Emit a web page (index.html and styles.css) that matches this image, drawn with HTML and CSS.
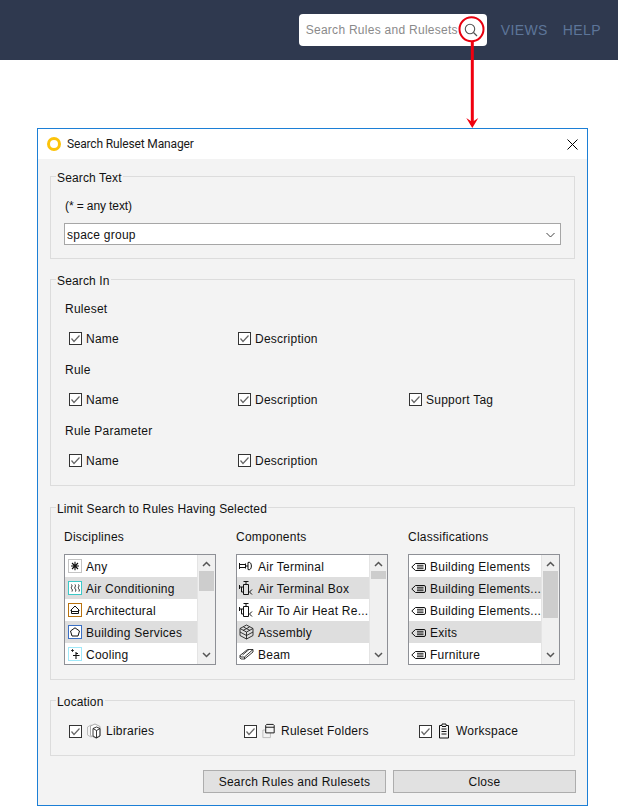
FILE: index.html
```html
<!DOCTYPE html>
<html lang="en">
<head>
<meta charset="utf-8">
<title>Search Ruleset Manager</title>
<link rel="stylesheet" href="styles.css">
</head>
<body>
<svg class="sprite" width="0" height="0" aria-hidden="true">
  <defs>
    <symbol id="chk" viewBox="0 0 13 13"><rect x=".5" y=".5" width="12" height="12" fill="#fff" stroke="#333"/><path d="M2.5 6.5 5 9.5 10.5 3.5" fill="none" stroke="#666" stroke-width="1.2"/></symbol>
    <symbol id="any" viewBox="0 0 14 14"><rect x=".5" y=".5" width="13" height="13" fill="#fff" stroke="#c4c4c4"/><path d="M3 7h8M7 2.800v8.400M4 4l6 6M10 4l-6 6" stroke="#111" fill="none" stroke-width="1.100"/></symbol>
    <symbol id="air" viewBox="0 0 14 14"><rect x=".5" y=".5" width="13" height="13" fill="#fff" stroke="#3cc8c8"/><path d="M3.5 3.5c1.500 1.500-1 3 0 4s1 2 .5 3M7 3.5c1.500 1.500-1 3 0 4s1 2 .5 3M10.500 3.500c1.500 1.500-1 3 0 4s1 2 .5 3" stroke="#222" fill="none"/></symbol>
    <symbol id="arc" viewBox="0 0 14 14"><rect x=".5" y=".5" width="13" height="13" fill="#fff" stroke="#b8720f"/><path d="M2.500 7.500 7 3l4.500 4.500M3.500 7v3.500h7V7M3 8.500h8" stroke="#111" fill="none"/></symbol>
    <symbol id="bld" viewBox="0 0 14 14"><rect x=".5" y=".5" width="13" height="13" fill="#fff" stroke="#3a6fc4"/><path d="M7 2.800 11.500 6 10 11H4L2.500 6Z" stroke="#111" fill="none"/></symbol>
    <symbol id="coo" viewBox="0 0 14 14"><rect x=".5" y=".5" width="13" height="13" fill="#fff" stroke="#a0e8f8"/><path d="M8 5v7M5 8.500h6.500M8 6.500h2" stroke="#111" fill="none" stroke-width="1.100"/><path d="M3 3.500h3M4.500 2v3" stroke="#111" fill="none" stroke-width=".8"/></symbol>
    <symbol id="ter" viewBox="0 0 16 16"><path d="M.5 5v6M.5 6.500h6M.5 9.500h6M6.500 5.500v5M9 4.500c4.500-2 4.500 9 0 7ZM6.500 8h2.500" stroke="#111" fill="none"/></symbol>
    <symbol id="box" viewBox="0 0 16 16"><path d="M4.500 1.500h5M7 1.500V4.500M4.500 4.500h5v10h-5ZM.5 5v4M.5 7h4M2.500 7v5h2M13 9.500 10.500 12l2.500 2.500" stroke="#111" fill="none"/></symbol>
    <symbol id="asm" viewBox="0 0 16 16"><path d="M7.500 1 14 4.500v7L7.500 15 1 11.500v-7ZM1 4.500 7.500 8 14 4.500M7.500 8v7M4.500 3 11 6.500M10.500 3 4 6.500M1 8l6.500 3.500L14 8" stroke="#222" fill="none" stroke-width=".9"/></symbol>
    <symbol id="bea" viewBox="0 0 16 16"><path d="M1 9.500 8.500 3.500h5.500L5.500 11H2ZM1 9.500v2.500l1 1h3.500L14 6V3.500M5.500 11v2M3.500 9 10 3.500" stroke="#222" fill="none" stroke-width=".9"/></symbol>
    <symbol id="tag" viewBox="0 0 16 16"><path d="M.8 9 4.500 5.500h8.500q1.500 0 1.500 1.500v4q0 1.500-1.500 1.500H4.500Z" stroke="#111" fill="none"/><path d="M6 7.300h6.500M6 9h6.500M6 10.700h6.500" stroke="#111" fill="none" stroke-width=".9"/></symbol>
    <symbol id="lib" viewBox="0 0 16 16"><path d="M1.500 4 5 2l3 1.500V12l-3 2-3.500-2Z" stroke="#bbb" fill="none"/><path d="M4.500 3 9 1l5 2.500v9L9.500 15l-5-2.500Z" stroke="#aaa" fill="#fff"/><path d="M7 5.500 10.500 4l3.500 1.500V13l-3.500 2L7 13ZM7 5.500l3.500 2 3.500-2M10.500 7.500V15" stroke="#222" fill="none" stroke-width=".9"/></symbol>
    <symbol id="fol" viewBox="0 0 16 17"><path d="M1.500 7.500h8v8h-8Z" stroke="#bbb" fill="none"/><path d="M4.500 2.500l1-1h7l1 1v8h-9ZM4.500 4.500h9" stroke="#111" fill="#f3f3f3"/></symbol>
    <symbol id="wsp" viewBox="0 0 12 16"><path d="M1.500 2.500h2.500v-1.500h4v1.500h2.500v12.500h-9ZM3.500 6h5M3.500 8.500h5M3.500 11h5M4 3.500h4" stroke="#111" fill="none"/></symbol>
  </defs>
</svg>

<header class="topbar">
  <div class="search">
    <span class="search-text">Search Rules and Rulesets</span>
    <svg class="search-icon" viewBox="0 0 14 14" width="14" height="14"><circle cx="6" cy="6" r="4.700" fill="none" stroke="#555" stroke-width="1.100"/><path d="M9.500 9.500 13 13" stroke="#555" stroke-width="1.200"/></svg>
  </div>
  <nav class="nav"><span>VIEWS</span><span>HELP</span></nav>
</header>

<svg class="callout" width="40" height="120" viewBox="0 0 40 120" aria-hidden="true">
  <circle cx="19.500" cy="17.300" r="12" fill="none" stroke="#e8000f" stroke-width="2"/>
  <path d="M20.300 30v83" stroke="#f0000f" stroke-width="3"/>
  <path d="M20.300 116l-6-10 6 4 6-4Z" fill="#f0000f"/>
</svg>

<main class="dialog">
  <div class="titlebar">
    <span class="ring"></span>
    <span class="title">Search Ruleset Manager</span>
    <svg class="close" width="11" height="11" viewBox="0 0 11 11"><path d="M.5.500l10 10M10.500.500l-10 10" stroke="#000" fill="none"/></svg>
  </div>
  <div class="body">
    <fieldset class="group g-text">
      <legend>Search Text</legend>
      <p class="hint">(* = any text)</p>
      <div class="combo"><span>space group</span><svg width="9" height="6" viewBox="0 0 9 6"><path d="M.5 1 4.500 5 8.500 1" fill="none" stroke="#444"/></svg></div>
    </fieldset>

    <fieldset class="group g-in">
      <legend>Search In</legend>
      <h3 class="sub">Ruleset</h3>
      <div class="checks">
        <label class="check"><svg><use href="#chk"/></svg>Name</label>
        <label class="check"><svg><use href="#chk"/></svg>Description</label>
      </div>
      <h3 class="sub">Rule</h3>
      <div class="checks">
        <label class="check"><svg><use href="#chk"/></svg>Name</label>
        <label class="check"><svg><use href="#chk"/></svg>Description</label>
        <label class="check"><svg><use href="#chk"/></svg>Support Tag</label>
      </div>
      <h3 class="sub">Rule Parameter</h3>
      <div class="checks">
        <label class="check"><svg><use href="#chk"/></svg>Name</label>
        <label class="check"><svg><use href="#chk"/></svg>Description</label>
      </div>
    </fieldset>

    <fieldset class="group g-limit">
      <legend>Limit Search to Rules Having Selected</legend>
      <div class="lists">
        <section>
          <h3 class="col-title">Disciplines</h3>
          <div class="listbox">
            <ul>
              <li><svg class="i14"><use href="#any"/></svg>Any</li>
              <li class="sel"><svg class="i14"><use href="#air"/></svg>Air Conditioning</li>
              <li><svg class="i14"><use href="#arc"/></svg>Architectural</li>
              <li class="sel"><svg class="i14"><use href="#bld"/></svg>Building Services</li>
              <li><svg class="i14"><use href="#coo"/></svg>Cooling</li>
            </ul>
            <div class="scroll"><svg class="up" width="9" height="6" viewBox="0 0 9 6"><path d="M1 5 4.500 1.500 8 5" fill="none" stroke="#555" stroke-width="1.500"/></svg><div class="thumb t1"></div><svg class="down" width="9" height="6" viewBox="0 0 9 6"><path d="M1 1 4.500 4.500 8 1" fill="none" stroke="#555" stroke-width="1.500"/></svg></div>
          </div>
        </section>
        <section>
          <h3 class="col-title">Components</h3>
          <div class="listbox">
            <ul class="tight">
              <li><svg class="i16"><use href="#ter"/></svg>Air Terminal</li>
              <li class="sel"><svg class="i16"><use href="#box"/></svg>Air Terminal Box</li>
              <li><svg class="i16"><use href="#box"/></svg>Air To Air Heat Re...</li>
              <li class="sel"><svg class="i16"><use href="#asm"/></svg>Assembly</li>
              <li><svg class="i16"><use href="#bea"/></svg>Beam</li>
            </ul>
            <div class="scroll"><svg class="up" width="9" height="6" viewBox="0 0 9 6"><path d="M1 5 4.500 1.500 8 5" fill="none" stroke="#555" stroke-width="1.500"/></svg><div class="thumb t2"></div><svg class="down" width="9" height="6" viewBox="0 0 9 6"><path d="M1 1 4.500 4.500 8 1" fill="none" stroke="#555" stroke-width="1.500"/></svg></div>
          </div>
        </section>
        <section>
          <h3 class="col-title">Classifications</h3>
          <div class="listbox">
            <ul class="tight">
              <li><svg class="i16"><use href="#tag"/></svg>Building Elements</li>
              <li class="sel"><svg class="i16"><use href="#tag"/></svg>Building Elements...</li>
              <li><svg class="i16"><use href="#tag"/></svg>Building Elements...</li>
              <li class="sel"><svg class="i16"><use href="#tag"/></svg>Exits</li>
              <li><svg class="i16"><use href="#tag"/></svg>Furniture</li>
            </ul>
            <div class="scroll"><svg class="up" width="9" height="6" viewBox="0 0 9 6"><path d="M1 5 4.500 1.500 8 5" fill="none" stroke="#555" stroke-width="1.500"/></svg><div class="thumb t3"></div><svg class="down" width="9" height="6" viewBox="0 0 9 6"><path d="M1 1 4.500 4.500 8 1" fill="none" stroke="#555" stroke-width="1.500"/></svg></div>
          </div>
        </section>
      </div>
    </fieldset>

    <fieldset class="group g-loc">
      <legend>Location</legend>
      <div class="locs">
        <label class="check"><svg><use href="#chk"/></svg><svg class="i16"><use href="#lib"/></svg>Libraries</label>
        <label class="check"><svg><use href="#chk"/></svg><svg class="i16"><use href="#fol"/></svg>Ruleset Folders</label>
        <label class="check"><svg><use href="#chk"/></svg><svg class="i16"><use href="#wsp"/></svg>Workspace</label>
      </div>
    </fieldset>

    <div class="actions">
      <button class="btn" type="button">Search Rules and Rulesets</button>
      <button class="btn" type="button">Close</button>
    </div>
  </div>
</main>
</body>
</html>
```

FILE: styles.css
```css
* { box-sizing: border-box; }
html, body { margin: 0; padding: 0; }
body {
  position: relative;
  width: 618px;
  height: 808px;
  overflow: hidden;
  background: #fff;
  color: #111;
  font: 12px/14px "Liberation Sans", Arial, sans-serif;
  letter-spacing: .25px;
}
.sprite { position: absolute; }

.topbar {
  height: 60px;
  background: #2f394f;
  display: flex;
  justify-content: flex-end;
  align-items: center;
  padding: 0 17px 0 0;
}
.search {
  width: 188px;
  height: 32px;
  background: #fff;
  border-radius: 4px;
  display: flex;
  align-items: center;
  padding: 0 9px 0 7px;
  justify-content: space-between;
  margin-top: -1px;
}
.search-text { color: #8a8a8a; font-size: 12px; letter-spacing: .27px; white-space: nowrap; }
.nav { display: flex; gap: 15px; margin-left: 14px; color: #5d7599; font-size: 14px; letter-spacing: .4px; }

.callout { position: absolute; left: 452px; top: 12px; z-index: 2; }

.dialog {
  width: 551px;
  height: 678px;
  margin: 68px 0 0 37px;
  border: 1px solid #1c7fd6;
  background: #f3f3f3;
  display: flex;
  flex-direction: column;
}
.titlebar {
  height: 30px;
  background: #fff;
  display: flex;
  align-items: center;
  padding: 0 9px 0 9px;
  flex: none;
}
.ring { width: 14px; height: 14px; border: 3px solid #fcc30b; border-radius: 50%; margin-right: 6px; }
.title { flex: 1; color: #1a1a1a; font-family: Roboto, "Liberation Sans", sans-serif; letter-spacing: -.15px; }

.body { padding: 9px 12px 0; display: flex; flex-direction: column; }
.group {
  margin: 0;
  padding: 0 0 0 14px;
  width: 525px;
  border: 1px solid #dcdcdc;
  min-inline-size: 0;
  flex: none;
}
.group legend { padding: 3px 1px 0; margin-left: -9px; line-height: 14px; letter-spacing: .14px; }
.g-text { height: 91px; }
.g-in { height: 215px; margin-top: 12px; }
.g-limit { height: 181px; margin-top: 13px; }
.g-loc { height: 64px; margin-top: 12px; }

.hint { margin: 14px 0 0; line-height: 14px; letter-spacing: -.1px; }
.combo {
  width: 497px;
  height: 22px;
  margin: 10px 0 0 -1px;
  background: #fff;
  border: 1px solid #a6a6a6;
  display: flex;
  align-items: center;
  justify-content: space-between;
  padding: 1px 5px 0 2px;
}

.sub { margin: 13px 0 0; font: inherit; letter-spacing: inherit; }
.g-in legend + .sub { margin-top: 14px; }
.g-in .sub { height: 14px; }
.checks {
  display: grid;
  grid-template-columns: 169px 171px auto;
  margin: 14px 0 0 4px;
  height: 17px;
}
.g-in .checks + .sub { margin-top: 16px; }
.check { display: flex; align-items: center; gap: 4px; white-space: nowrap; }
.check > svg:first-child { width: 13px; height: 13px; flex: none; }

.lists { display: grid; grid-template-columns: 172px 172px 152px; margin: 14px 0 0 -1px; }
.col-title { margin: 0 0 10px; font: inherit; letter-spacing: inherit; line-height: 14px; }
.listbox {
  width: 152px;
  height: 111px;
  background: #fff;
  border: 1px solid #8e9096;
  display: flex;
}
.listbox ul { flex: 1; list-style: none; margin: 0; padding: 0; min-width: 0; }
.listbox li {
  height: 22px;
  display: flex;
  align-items: center;
  gap: 4px;
  padding: 2px 0 0 3px;
  white-space: nowrap;
}
.listbox ul.tight li { gap: 3px; padding-left: 2px; }
.listbox li.sel { background: #dedede; }
.i14 { width: 14px; height: 14px; flex: none; }
.i16 { width: 16px; height: 16px; flex: none; }
.listbox .i14, .listbox .i16 { margin-bottom: 2px; }

.scroll {
  width: 18px;
  flex: none;
  background: #f0f0f0;
  border-left: 1px solid #e4e4e4;
  position: relative;
}
.scroll .up { position: absolute; left: 4px; top: 6px; }
.scroll .down { position: absolute; left: 4px; bottom: 6px; }
.thumb { position: absolute; left: 1px; right: 1px; top: 16px; background: #cdcdcd; }
.t1 { height: 20px; }
.t2 { height: 8px; }
.t3 { height: 47px; }

.locs { display: grid; grid-template-columns: 175px 175px auto; margin: 13px 0 0 4px; }
.locs .check { height: 18px; }

.actions { display: flex; gap: 7px; margin: 14px 0 0 153px; width: 373px; flex: none; }
.btn {
  flex: none;
  width: 183px;
  height: 23px;
  padding: 0;
  background: #e1e1e1;
  border: 1px solid #adadad;
  border-radius: 0;
  color: #111;
  font: inherit;
  letter-spacing: inherit;
}
```
